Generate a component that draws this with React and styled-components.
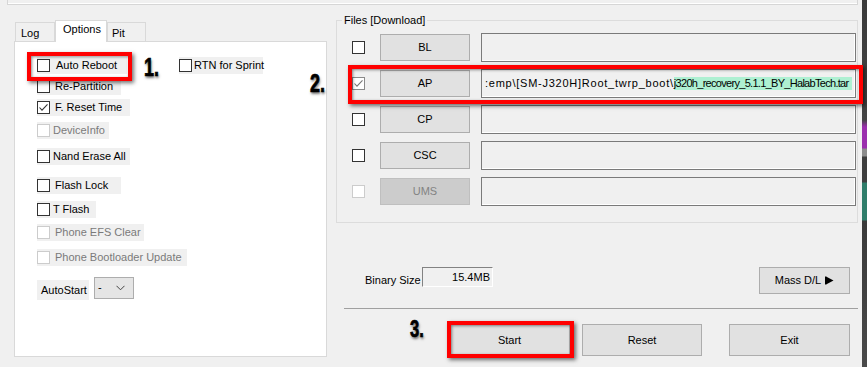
import React from 'react';
import styled, { createGlobalStyle } from 'styled-components';

const Global = createGlobalStyle`
  html, body { margin: 0; padding: 0; }
  body {
    width: 867px; height: 367px; overflow: hidden;
    background: #f0f0f0;
    font-family: "Liberation Sans", Arial, sans-serif;
    font-size: 11px; color: #000;
  }
  * { box-sizing: border-box; }
`;

const Screen = styled.div`
  position: relative;
  display: flex;
  width: 867px;
  height: 367px;
  overflow: hidden;
`;

const Window = styled.div`
  width: 862px;
  height: 367px;
  background: #f0f0f0;
  display: flex;
  flex-direction: column;
`;

const Desktop = styled.div`
  width: 5px;
  height: 367px;
  background: linear-gradient(
    to bottom,
    #3a3a3a 0px, #444 120px,
    #9b2fae 127px, #9b2fae 148px,
    #8c8c8c 149px, #8c8c8c 156px,
    #3e3e3e 157px, #3e3e3e 182px,
    #2f7d6a 183px, #2f7d6a 220px,
    #3a3a3a 221px, #4a4a4a 367px
  );
`;

const TopFrame = styled.div`
  margin-left: 7px;
  width: 851px;
  height: 5px;
  border: 1px solid #d6d6d6;
  border-top: none;
  box-shadow: inset 0 -1px 0 #fff;
`;

const Main = styled.div`
  display: flex;
  padding-left: 14px;
  gap: 9px;
`;

/* ---------- left: tabs ---------- */
const LeftColumn = styled.div`
  width: 313px;
  margin-top: 15px;
  display: flex;
  flex-direction: column;
`;

const TabStrip = styled.div`
  display: flex;
  align-items: flex-end;
  height: 21px;
  padding-left: 1px;
`;

const Tab = styled.div`
  position: relative;
  z-index: ${p => (p.$active ? 1 : 0)};
  width: ${p => p.$w}px;
  height: ${p => (p.$active ? 22 : 19)}px;
  margin-bottom: ${p => (p.$active ? -1 : 0)}px;
  padding: ${p => (p.$active ? 2 : 4)}px 0 0 ${p => p.$pl}px;
  background: ${p => (p.$active ? '#fff' : '#f0f0f0')};
  border: 1px solid #d9d9d9;
  border-bottom: none;
  line-height: 13px;
  white-space: nowrap;
`;

const Panel = styled.div`
  width: 313px;
  height: 316px;
  background: #fff;
  border: 1px solid #d9d9d9;
  padding: 15px 0 0 22px;
  display: flex;
  flex-direction: column;
`;

const OptionRow = styled.div`
  display: flex;
  align-items: center;
`;

const CheckItem = styled.div`
  display: flex;
  align-items: center;
  gap: ${p => p.$gap}px;
  width: ${p => p.$w}px;
  height: 17px;
  margin-top: ${p => p.$mt || 0}px;
  margin-left: ${p => p.$ml || 0}px;
  background: #f0f0f0;
  color: ${p => (p.$disabled ? '#7a7a7a' : '#000')};
  line-height: 13px;
  white-space: nowrap;
  flex-shrink: 0;
`;

const Box = styled.span`
  width: 13px;
  height: 13px;
  flex-shrink: 0;
  display: flex;
  align-items: center;
  justify-content: center;
  background: #fff;
  border: 1px solid ${p => (p.$disabled ? '#cccccc' : p.$soft ? '#8a8a8a' : '#333')};
`;

const AutoStartRow = styled.div`
  display: flex;
  align-items: flex-start;
  margin-top: 11px;
`;

const AutoLabel = styled.div`
  width: 52px;
  height: 20px;
  margin-top: 3px;
  padding: 4px 0 0 4px;
  background: #f0f0f0;
  line-height: 13px;
`;

const Select = styled.div`
  width: 40px;
  height: 22px;
  margin-left: 5px;
  border: 1px solid #adadad;
  background: #e5e5e5;
  display: flex;
  align-items: center;
  justify-content: space-between;
  padding: 0 8px 1px 3px;
  line-height: 13px;
`;

/* ---------- right: files ---------- */
const RightColumn = styled.div`
  width: 522px;
  margin-top: 8px;
  display: flex;
  flex-direction: column;
`;

const Group = styled.fieldset`
  margin: 0;
  width: 522px;
  border: 1px solid #dcdcdc;
  padding: 6px 0 16px 0;
  display: flex;
  flex-direction: column;
  gap: 7px;
`;

const Legend = styled.legend`
  margin-left: 5px;
  padding: 0 2px;
  line-height: 14px;
`;

const FileRow = styled.div`
  display: flex;
  align-items: center;
  height: 29px;
  padding-left: 15px;
`;

const FileCheck = styled.div`
  width: 13px;
  margin-right: 15px;
  display: flex;
`;

const Button = styled.div`
  width: ${p => p.$w}px;
  height: ${p => p.$h}px;
  display: flex;
  align-items: center;
  justify-content: center;
  gap: 4px;
  background: ${p => (p.$disabled ? '#cccccc' : '#e1e1e1')};
  border: 1px solid ${p => (p.$disabled ? '#bfbfbf' : '#adadad')};
  color: ${p => (p.$disabled ? '#838383' : '#000')};
  line-height: 13px;
  flex-shrink: 0;
`;

const PathBox = styled.div`
  width: 375px;
  height: 29px;
  margin-left: 11px;
  border: 1px solid #7a7a7a;
  box-shadow: inset -1px -1px 0 #fff;
  background: #f0f0f0;
  padding: 0 0 0 3px;
  display: flex;
  align-items: center;
  white-space: nowrap;
  overflow: hidden;
  line-height: 13px;
`;

const PathHead = styled.span`
  letter-spacing: 0.75px;
`;

const Selected = styled.span`
  background: #aef0d2;
  letter-spacing: -0.7px;
  padding-right: 3px;
`;

const BinaryRow = styled.div`
  display: flex;
  align-items: flex-start;
  margin-top: 44px;
  padding-left: 29px;
  padding-right: 8px;
`;

const BinaryLabel = styled.div`
  width: 57px;
  margin-top: 7px;
  line-height: 13px;
`;

const SizeBox = styled.div`
  width: 71px;
  height: 20px;
  border-top: 1px solid #828282;
  border-left: 1px solid #828282;
  border-right: 1px solid #fff;
  border-bottom: 1px solid #fff;
  text-align: right;
  padding-right: 2px;
  line-height: 18px;
`;

const Spacer = styled.div`
  flex: 1;
`;

const Separator = styled.div`
  margin: 14px 0 0 8px;
  width: 514px;
  border-top: 1px solid #a0a0a0;
`;

const ActionRow = styled.div`
  display: flex;
  margin-top: 15px;
  padding-left: 113px;
  gap: 12px;
`;

const ExitSlot = styled.div`
  margin-left: 15px;
`;

/* ---------- annotations (overlay) ---------- */
const RedFrame = styled.div`
  position: absolute;
  left: ${p => p.$x}px;
  top: ${p => p.$y}px;
  width: ${p => p.$w}px;
  height: ${p => p.$h}px;
  border: 4px solid #ff0000;
  box-shadow: 2px 2px 4px rgba(0, 0, 0, 0.55), inset 1px 1px 3px rgba(0, 0, 0, 0.45);
  pointer-events: none;
`;

const Mark = styled.div`
  position: absolute;
  left: ${p => p.$x}px;
  top: ${p => p.$y}px;
  font-family: "Liberation Sans", Arial, sans-serif;
  font-weight: bold;
  font-size: ${p => p.$size}px;
  line-height: 1;
  color: #000;
  transform: scaleX(0.72);
  transform-origin: left top;
  -webkit-text-stroke: 0.7px #000;
  text-shadow: 1px 2px 3px rgba(0, 0, 0, 0.55);
`;

const Check = ({ color }) => (
  <svg width="11" height="11" viewBox="0 0 11 11">
    <polyline points="1.5,5.5 4,8.2 9.5,2.3" fill="none" stroke={color} strokeWidth="1.1" />
  </svg>
);

const CheckBox = ({ checked, disabled, soft }) => (
  <Box $disabled={disabled} $soft={soft}>
    {checked && <Check color={soft ? '#777' : '#333'} />}
  </Box>
);

const Option = ({ label, w, mt, ml, gap = 5, checked, disabled }) => (
  <CheckItem $w={w} $mt={mt} $ml={ml} $gap={gap} $disabled={disabled}>
    <CheckBox checked={checked} disabled={disabled} />
    <span>{label}</span>
  </CheckItem>
);

const options = [
  { label: 'Re-Partition', w: 84, mt: 4 },
  { label: 'F. Reset Time', w: 93, mt: 4, checked: true },
  { label: 'DeviceInfo', w: 72, mt: 6, disabled: true, gap: 3 },
  { label: 'Nand Erase All', w: 93, mt: 9, gap: 3 },
  { label: 'Flash Lock', w: 84, mt: 12 },
  { label: 'T Flash', w: 59, mt: 7, gap: 3 },
  { label: 'Phone EFS Clear', w: 107, mt: 6, disabled: true },
  { label: 'Phone Bootloader Update', w: 150, mt: 8, disabled: true },
];

const files = [
  { id: 'BL' },
  { id: 'AP', checked: true, path: true },
  { id: 'CP' },
  { id: 'CSC' },
  { id: 'UMS', disabled: true },
];

const Chevron = () => (
  <svg width="9" height="6" viewBox="0 0 9 6">
    <polyline points="0.5,0.8 4.5,4.8 8.5,0.8" fill="none" stroke="#444" strokeWidth="1" />
  </svg>
);

const PlayArrow = () => (
  <svg width="9" height="9" viewBox="0 0 9 9">
    <rect x="0" y="0.5" width="1.2" height="8" fill="#000" />
    <polygon points="1,0.5 8.5,4.5 1,8.5" fill="#000" />
  </svg>
);

export default function App() {
  return (
    <>
      <Global />
      <Screen>
        <Window>
          <TopFrame />
          <Main>
            <LeftColumn>
              <TabStrip>
                <Tab $w={40} $pl={5}>Log</Tab>
                <Tab $w={52} $pl={7} $active>Options</Tab>
                <Tab $w={39} $pl={4}>Pit</Tab>
              </TabStrip>
              <Panel>
                <OptionRow>
                  <Option label="Auto Reboot" w={90} gap={6} />
                  <CheckItem $w={84} $ml={52} $gap={2}>
                    <CheckBox />
                    <span>RTN for Sprint</span>
                  </CheckItem>
                </OptionRow>
                {options.map(o => (
                  <Option key={o.label} {...o} />
                ))}
                <AutoStartRow>
                  <AutoLabel>AutoStart</AutoLabel>
                  <Select>
                    <span>-</span>
                    <Chevron />
                  </Select>
                </AutoStartRow>
              </Panel>
            </LeftColumn>

            <RightColumn>
              <Group>
                <Legend>Files [Download]</Legend>
                {files.map(f => (
                  <FileRow key={f.id}>
                    <FileCheck>
                      <CheckBox checked={f.checked} disabled={f.disabled} soft={f.checked} />
                    </FileCheck>
                    <Button $w={90} $h={27} $disabled={f.disabled}>{f.id}</Button>
                    <PathBox>
                      {f.path && (
                        <>
                          <PathHead>:emp\[SM-J320H]Root_twrp_boot\</PathHead>
                          <Selected>j320h_recovery_5.1.1_BY_HalabTech.tar</Selected>
                        </>
                      )}
                    </PathBox>
                  </FileRow>
                ))}
              </Group>
              <BinaryRow>
                <BinaryLabel>Binary Size</BinaryLabel>
                <SizeBox>15.4MB</SizeBox>
                <Spacer />
                <Button $w={91} $h={27}>
                  <span>Mass D/L</span>
                  <PlayArrow />
                </Button>
              </BinaryRow>
              <Separator />
              <ActionRow>
                <Button $w={121} $h={32}>Start</Button>
                <Button $w={120} $h={32}>Reset</Button>
                <ExitSlot>
                  <Button $w={121} $h={32}>Exit</Button>
                </ExitSlot>
              </ActionRow>
            </RightColumn>
          </Main>
        </Window>
        <Desktop />

        <RedFrame $x={27} $y={52} $w={105} $h={29} />
        <RedFrame $x={348} $y={65} $w={515} $h={39} />
        <RedFrame $x={447} $y={321} $w={127} $h={37} />
        <Mark $x={144} $y={55} $size={25}>1.</Mark>
        <Mark $x={310} $y={71} $size={25}>2.</Mark>
        <Mark $x={410} $y={318} $size={23}>3.</Mark>
      </Screen>
    </>
  );
}
